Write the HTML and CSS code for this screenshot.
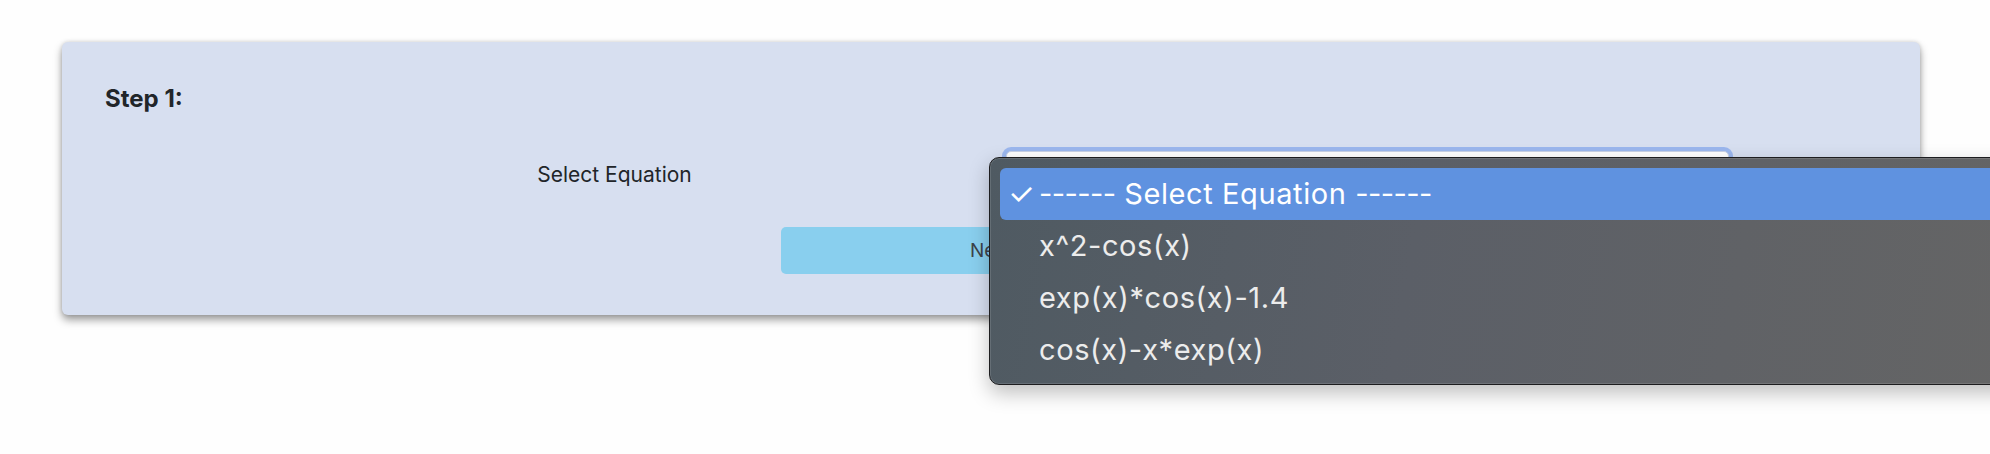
FILE: index.html
```html
<!DOCTYPE html>
<html lang="en">
<head>
<meta charset="utf-8">
<title>Step 1</title>
<link rel="stylesheet" href="styles.css">
</head>
<body>
<div class="page">
  <div class="card">
    <h5 class="step-title">Step 1:</h5>
    <div class="form-row">
      <div class="col col-label"><label class="field-label">Select Equation</label></div>
      <div class="col col-field"><div class="select-box"></div></div>
    </div>
    <div class="actions">
      <button class="btn-next">Next</button>
    </div>
  </div>
  <div class="popup-menu">
    <div class="menu-item selected"><span class="check">✓</span><span class="item-text"><span class="dashes">------</span> Select Equation <span class="dashes">------</span></span></div>
    <div class="menu-item"><span class="check"></span><span class="item-text">x^2-cos(x)</span></div>
    <div class="menu-item"><span class="check"></span><span class="item-text">exp(x)*cos(x)-1.4</span></div>
    <div class="menu-item"><span class="check"></span><span class="item-text">cos(x)-x*exp(x)</span></div>
  </div>
</div>
</body>
</html>
```

FILE: styles.css
```css
* { box-sizing: border-box; }
html, body {
  margin: 0;
  padding: 0;
  background: #fefefe;
  font-family: Inter, "Noto Sans", "Liberation Sans", sans-serif;
  color: #212529;
  overflow: hidden;
}
.page {
  position: relative;
  width: 1990px;
  height: 454px;
  padding: 42px 70px 0 62px;
}
.card {
  background: #d7dff0;
  border-radius: 6px;
  padding: 43px 43px 41px 43px;
  box-shadow: 0 5px 9px rgba(0,0,0,0.38), 0 0 4px rgba(0,0,0,0.15);
}
.step-title {
  margin: 0;
  font-size: 24px;
  line-height: 28px;
  font-weight: 700;
}
.form-row {
  display: flex;
  align-items: center;
  width: 1506px;
  margin: 38px auto 0;
}
.col {
  flex: 1 1 0;
  padding: 0 15px;
}
.col-label { text-align: center; }
.field-label {
  font-size: 21px;
  line-height: 28px;
}
.select-box {
  height: 48px;
  background: #fff;
  border: 1px solid #c9d3e6;
  border-radius: 5px;
  box-shadow: 0 0 0 4px rgba(140,172,238,0.8);
}
.actions {
  display: flex;
  justify-content: center;
  margin-top: 28px;
}
.btn-next {
  width: 420px;
  height: 47px;
  border: none;
  border-radius: 5px;
  background: #89cfee;
  color: #3c4249;
  font-family: Inter, "Noto Sans", sans-serif;
  font-size: 19px;
}
.popup-menu {
  position: absolute;
  left: 989px;
  top: 157px;
  width: 1060px;
  height: 228px;
  padding: 10px 10px;
  border: 1px solid #1d1d1f;
  border-radius: 10px;
  background: linear-gradient(100deg, #4f5a62 0%, #5b5f67 40%, #656565 100%);
  box-shadow: inset 0 0 0 1px rgba(255,255,255,0.12), 0 8px 20px rgba(0,0,0,0.25);
}
.menu-item {
  display: flex;
  align-items: center;
  height: 52px;
  padding-left: 8px;
  border-radius: 6px;
  color: #ececec;
  font-family: Inter, "Noto Sans", sans-serif;
  font-size: 29px;
  letter-spacing: 0.6px;
  line-height: 52px;
}
.menu-item.selected {
  background: #5f92e0;
  color: #ffffff;
}
.dashes {
  letter-spacing: -0.6px;
}
.check {
  width: 31px;
  font-size: 30px;
  letter-spacing: 0;
}
```
